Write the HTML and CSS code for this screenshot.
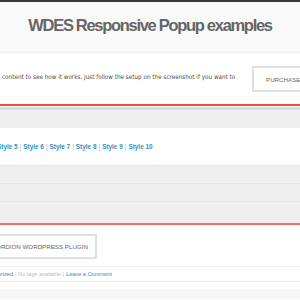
FILE: index.html
```html
<!DOCTYPE html>
<html>
<head>
<meta name="viewport" content="width=device-width, initial-scale=1">
<title>WDES Responsive Popup examples</title>
<link rel="stylesheet" href="styles.css">
</head>
<body>
    <div class="header">
        <h1>WDES Responsive Popup examples</h1>
    </div>
    <div class="intro">
        <p class="intro-text">content to see how it works. Just follow the setup on the screenshot if you want to</p>
        <a class="btn btn-purchase" href="#">PURCHASE WDES POPUP</a>
    </div>
    <div class="tabs">
        <div class="row row-top"></div>
        <div class="links">
            <a href="#">Style 5</a> | <a href="#">Style 6</a> | <a href="#">Style 7</a> | <a href="#">Style 8</a> | <a href="#">Style 9</a> | <a href="#">Style 10</a>
        </div>
        <div class="row"></div>
        <div class="row"></div>
        <div class="row row-last"></div>
    </div>
    <div class="footer-area">
        <a class="btn btn-plugin" href="#">ACCORDION WORDPRESS PLUGIN</a>
        <div class="meta">
            <a href="#">Uncategorized</a> | No tags available | <a href="#">Leave a Comment</a>
        </div>
    </div>
    <div class="bottom"></div>
</body>
</html>
```
FILE: styles.css
```css
html {
    overflow: hidden;
}
body {
    margin: 0;
    width: 300px;
    font-family: "DejaVu Sans", sans-serif;
    background-color: #fff;
    color: #555;
}
a {
    color: #2d8bbd;
    text-decoration: none;
}

.header {
    border-top: 2px solid #3a3a3a;
    background-color: #f9f9f9;
    border-bottom: 1px solid #eee;
    height: 50px;
    display: flex;
    align-items: center;
    justify-content: center;
}
.header h1 {
    margin: 0 0 4px 0;
    font-family: "Liberation Sans", Arial, sans-serif;
    font-size: 16.5px;
    font-weight: bold;
    letter-spacing: -1.3px;
    color: #666;
    white-space: nowrap;
}

.intro {
    height: 51px;
    display: flex;
    align-items: center;
    border-bottom: 2px solid #f04c4c;
    padding-left: 2px;
}
.intro-text {
    margin: 0 0 4px 0;
    width: 250px;
    flex-shrink: 0;
    font-size: 6.3px;
    font-stretch: condensed;
    color: #4a4a4a;
    white-space: nowrap;
}
.btn {
    display: flex;
    align-items: center;
    border: 2px solid #e0e0e0;
    color: #666;
    font-family: "Liberation Sans", Arial, sans-serif;
    font-size: 6.2px;
    white-space: nowrap;
    box-sizing: border-box;
}
.btn-purchase {
    flex-shrink: 0;
    height: 26px;
    padding: 0 12px;
    margin-top: 1px;
}

.tabs {
    background-color: #efefef;
    border-top: 3px solid #ddd;
    margin-top: 1px;
    border-bottom: 2px solid #f56a6a;
}
.row {
    height: 17px;
    border-top: 1px solid #e6e6e6;
}
.row-top {
    height: 18px;
    border-top: none;
}
.row-last {
    height: 21px;
}
.links {
    background-color: #fff;
    height: 37px;
    display: flex;
    align-items: center;
    margin-left: -3px;
    font-family: "Liberation Sans", Arial, sans-serif;
    font-size: 6.4px;
    color: #aaa;
    white-space: nowrap;
    gap: 2px;
}
.links a {
    font-weight: bold;
    color: #3090c0;
}

.footer-area {
    height: 64px;
    padding-top: 9px;
    box-sizing: border-box;
}
.btn-plugin {
    height: 25px;
    width: 126px;
    margin-left: -29px;
    padding-left: 10px;
}
.meta {
    margin-top: 7px;
    border-top: 1px solid #eee;
    border-bottom: 1px solid #eee;
    height: 14px;
    display: flex;
    align-items: center;
    gap: 2px;
    margin-left: -23px;
    font-family: "Liberation Sans", Arial, sans-serif;
    font-size: 5.6px;
    color: #bbb;
    white-space: nowrap;
}
.bottom {
    background-color: #f7f7f7;
    height: 10px;
}
```
